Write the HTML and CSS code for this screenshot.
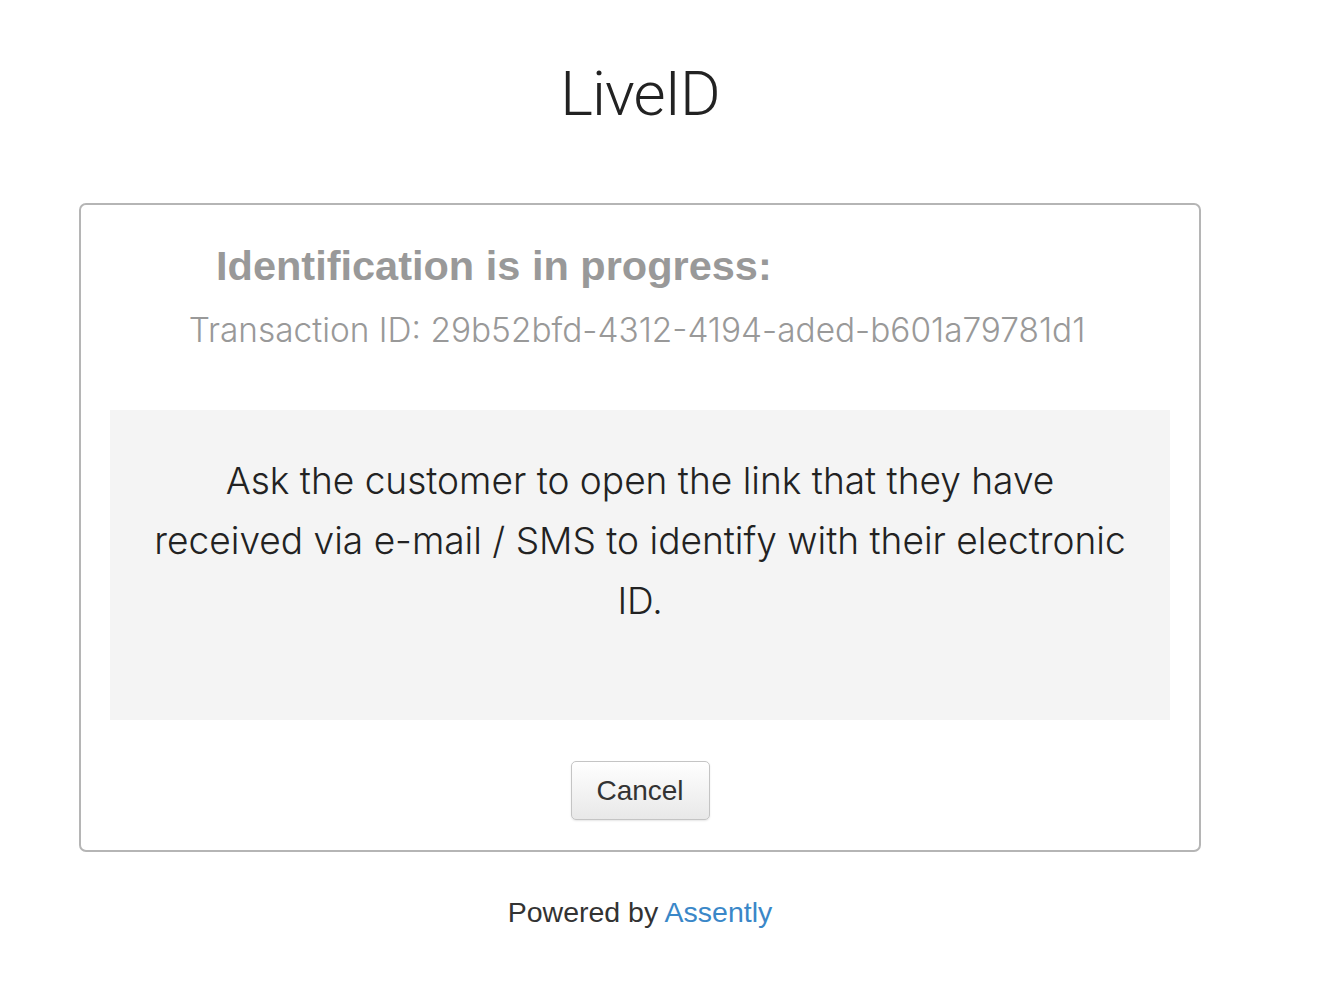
FILE: index.html
```html
<!DOCTYPE html>
<html>
<head>
<meta charset="utf-8">
<link rel="stylesheet" href="styles.css">
</head>
<body>
<div class="page">
  <h1 class="brand">LiveID</h1>
  <div class="card">
    <h2 class="status">Identification is in progress:</h2>
    <p class="txid">Transaction ID: 29b52bfd-4312-4194-aded-b601a79781d1</p>
    <div class="notice">Ask the customer to open the link that they have received via e-mail / SMS to identify with their electronic ID.</div>
    <div class="actions"><button class="btn">Cancel</button></div>
  </div>
  <p class="footer">Powered by <a class="link" href="#">Assently</a></p>
</div>
</body>
</html>
```
FILE: styles.css
```css
html, body { margin: 0; padding: 0; background: #fff; }
body { font-family: "Inter", "Liberation Sans", sans-serif; color: #333; }
.page { width: 1122px; margin: 0 0 0 79px; display: flex; flex-direction: column; align-items: stretch; }
.brand { margin: 56px 0 0; text-align: center; font-family: "Roboto", "Liberation Sans", sans-serif; font-weight: 300; font-size: 62px; line-height: 76px; color: #222; letter-spacing: -1px; }
.card { margin-top: 71px; border: 2px solid #b5b5b5; border-radius: 7px; height: 649px; box-sizing: border-box; padding: 0 29px; display: flex; flex-direction: column; }
.status { margin: 37px 0 0 106px; font-family: "Liberation Sans", sans-serif; font-weight: 700; font-size: 41.5px; line-height: 48px; color: #999; }
.txid { margin: 18px 6px 0 0; text-align: center; font-weight: 300; font-size: 33.4px; line-height: 44px; color: #999; }
.notice { margin-top: 58px; background: #f4f4f4; height: 310px; box-sizing: border-box; padding: 41px 42px 0; text-align: center; font-weight: 300; font-size: 37.1px; line-height: 60px; color: #222; }
.actions { margin-top: 41px; display: flex; justify-content: center; }
.btn { width: 139px; height: 59px; border: 1px solid #c4c4c4; border-radius: 5px; background: linear-gradient(#ffffff, #e8e8e8); box-shadow: 0 1px 2px rgba(0,0,0,0.1); font-family: "Liberation Sans", sans-serif; font-size: 28px; color: #333; padding: 0; }
.footer { margin: 43px 0 0; text-align: center; font-family: "Liberation Sans", sans-serif; font-size: 28.5px; line-height: 34px; color: #333; }
.link { color: #3a87c8; text-decoration: none; }
```
